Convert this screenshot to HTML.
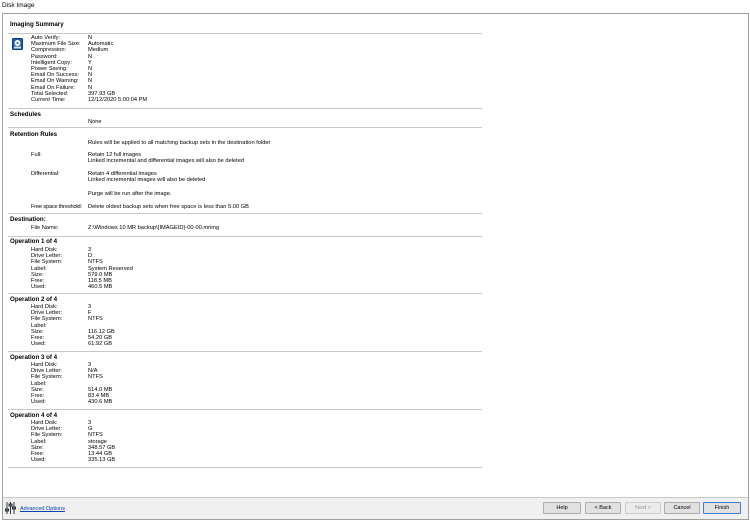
<!DOCTYPE html><html><head><style>
body{margin:0;width:750px;height:521px;background:#fff;font-family:"Liberation Sans",sans-serif;font-size:5.7px;color:#000;position:relative;overflow:hidden}
.a{position:absolute;white-space:nowrap;line-height:6.2px}
.h{font-weight:bold;font-size:6.2px}
.hr{position:absolute;left:8px;width:474px;height:1px;background:#c8c8c8}
.btn{position:absolute;top:502px;height:10px;border:1px solid #adadad;background:#e1e1e1;font-size:5.5px;line-height:10px;text-align:center;border-radius:1px}
</style></head><body>
<div class="a" style="left:2px;top:2px;font-size:6.5px;line-height:8px">Disk Image</div>
<div style="position:absolute;left:2px;top:13px;width:745px;height:484px;border:1px solid #a0a0a0;border-bottom:none"></div>
<div class="a h" style="left:10px;top:22px">Imaging Summary</div>
<div class="hr" style="top:33px"></div>
<svg style="position:absolute;left:12px;top:38px" width="11" height="12" viewBox="0 0 11 12"><rect x="0.5" y="0.5" width="10" height="11" rx="1" fill="#1a5fa8" stroke="#0c3d70"/><circle cx="5.5" cy="5" r="3" fill="#fff"/><circle cx="5.5" cy="5" r="1" fill="#1a5fa8"/><rect x="2" y="8.5" width="7" height="2" fill="#cde"/></svg>
<div class="a" style="left:31px;top:35px">Auto Verify:<br>Maximum File Size:<br>Compression:<br>Password:<br>Intelligent Copy:<br>Power Saving:<br>Email On Success:<br>Email On Warning:<br>Email On Failure:<br>Total Selected:<br>Current Time:</div>
<div class="a" style="left:88px;top:35px">N<br>Automatic<br>Medium<br>N<br>Y<br>N<br>N<br>N<br>N<br>397.93 GB<br>12/12/2020 5:00:04 PM</div>
<div class="hr" style="top:108px"></div>
<div class="a h" style="left:10px;top:112px">Schedules</div>
<div class="a" style="left:88px;top:119px">None</div>
<div class="hr" style="top:127px"></div>
<div class="a h" style="left:10px;top:132px">Retention Rules</div>
<div class="a" style="left:88px;top:140px">Rules will be applied to all matching backup sets in the destination folder</div>
<div class="a" style="left:31px;top:152px">Full:</div>
<div class="a" style="left:88px;top:152px">Retain 12 full images<br>Linked incremental and differential images will also be deleted</div>
<div class="a" style="left:31px;top:171px">Differential:</div>
<div class="a" style="left:88px;top:171px">Retain 4 differential images<br>Linked incremental images will also be deleted</div>
<div class="a" style="left:88px;top:191px">Purge will be run after the image.</div>
<div class="a" style="left:31px;top:204px;letter-spacing:-0.2px">Free space threshold:</div>
<div class="a" style="left:88px;top:204px">Delete oldest backup sets when free space is less than 5.00 GB</div>
<div class="hr" style="top:213px"></div>
<div class="a h" style="left:10px;top:217px">Destination:</div>
<div class="a" style="left:31px;top:225px">File Name:</div>
<div class="a" style="left:88px;top:225px">Z:\Windows 10 MR backup\{IMAGEID}-00-00.mrimg</div>
<div class="hr" style="top:236px"></div>
<div class="a h" style="left:10px;top:239px">Operation 1 of 4</div>
<div class="a" style="left:31px;top:247px">Hard Disk:<br>Drive Letter:<br>File System:<br>Label:<br>Size:<br>Free:<br>Used:</div>
<div class="a" style="left:88px;top:247px">3<br>D<br>NTFS<br>System Reserved<br>579.0 MB<br>118.5 MB<br>460.5 MB</div>
<div class="hr" style="top:293px"></div>
<div class="a h" style="left:10px;top:297px">Operation 2 of 4</div>
<div class="a" style="left:31px;top:304px">Hard Disk:<br>Drive Letter:<br>File System:<br>Label:<br>Size:<br>Free:<br>Used:</div>
<div class="a" style="left:88px;top:304px">3<br>F<br>NTFS<br>&nbsp;<br>116.12 GB<br>54.20 GB<br>61.92 GB</div>
<div class="hr" style="top:351px"></div>
<div class="a h" style="left:10px;top:355px">Operation 3 of 4</div>
<div class="a" style="left:31px;top:362px">Hard Disk:<br>Drive Letter:<br>File System:<br>Label:<br>Size:<br>Free:<br>Used:</div>
<div class="a" style="left:88px;top:362px">3<br>N/A<br>NTFS<br>&nbsp;<br>514.0 MB<br>83.4 MB<br>430.6 MB</div>
<div class="hr" style="top:409px"></div>
<div class="a h" style="left:10px;top:413px">Operation 4 of 4</div>
<div class="a" style="left:31px;top:420px">Hard Disk:<br>Drive Letter:<br>File System:<br>Label:<br>Size:<br>Free:<br>Used:</div>
<div class="a" style="left:88px;top:420px">3<br>G<br>NTFS<br>storage<br>348.57 GB<br>13.44 GB<br>335.13 GB</div>
<div class="hr" style="top:467px"></div>
<div style="position:absolute;left:2px;top:497px;width:745px;height:21px;background:#f0f0f0;border:1px solid #a0a0a0;border-top:1px solid #c8c8c8"></div>
<svg style="position:absolute;left:5px;top:502px" width="11" height="12" viewBox="0 0 11 12" stroke="#333" stroke-width="1"><line x1="2" y1="0" x2="2" y2="12"/><line x1="5.5" y1="0" x2="5.5" y2="12"/><line x1="9" y1="0" x2="9" y2="12"/><rect x="0.5" y="7" width="3" height="2" fill="#4a7fc0"/><rect x="4" y="2" width="3" height="2" fill="#4a7fc0"/><rect x="7.5" y="5" width="3" height="2" fill="#4a7fc0"/></svg>
<div class="a" style="left:20px;top:506px;color:#0645ad;text-decoration:underline;font-size:5.5px">Advanced Options</div>
<div class="btn" style="left:543px;width:36px">Help</div>
<div class="btn" style="left:585px;width:34px">&lt; Back</div>
<div class="btn" style="left:625px;width:34px;color:#999;border-color:#ccc;background:#ececec">Next &gt;</div>
<div class="btn" style="left:664px;width:34px">Cancel</div>
<div class="btn" style="left:703px;width:36px;border-color:#3c7fd1">Finish</div>
</body></html>
